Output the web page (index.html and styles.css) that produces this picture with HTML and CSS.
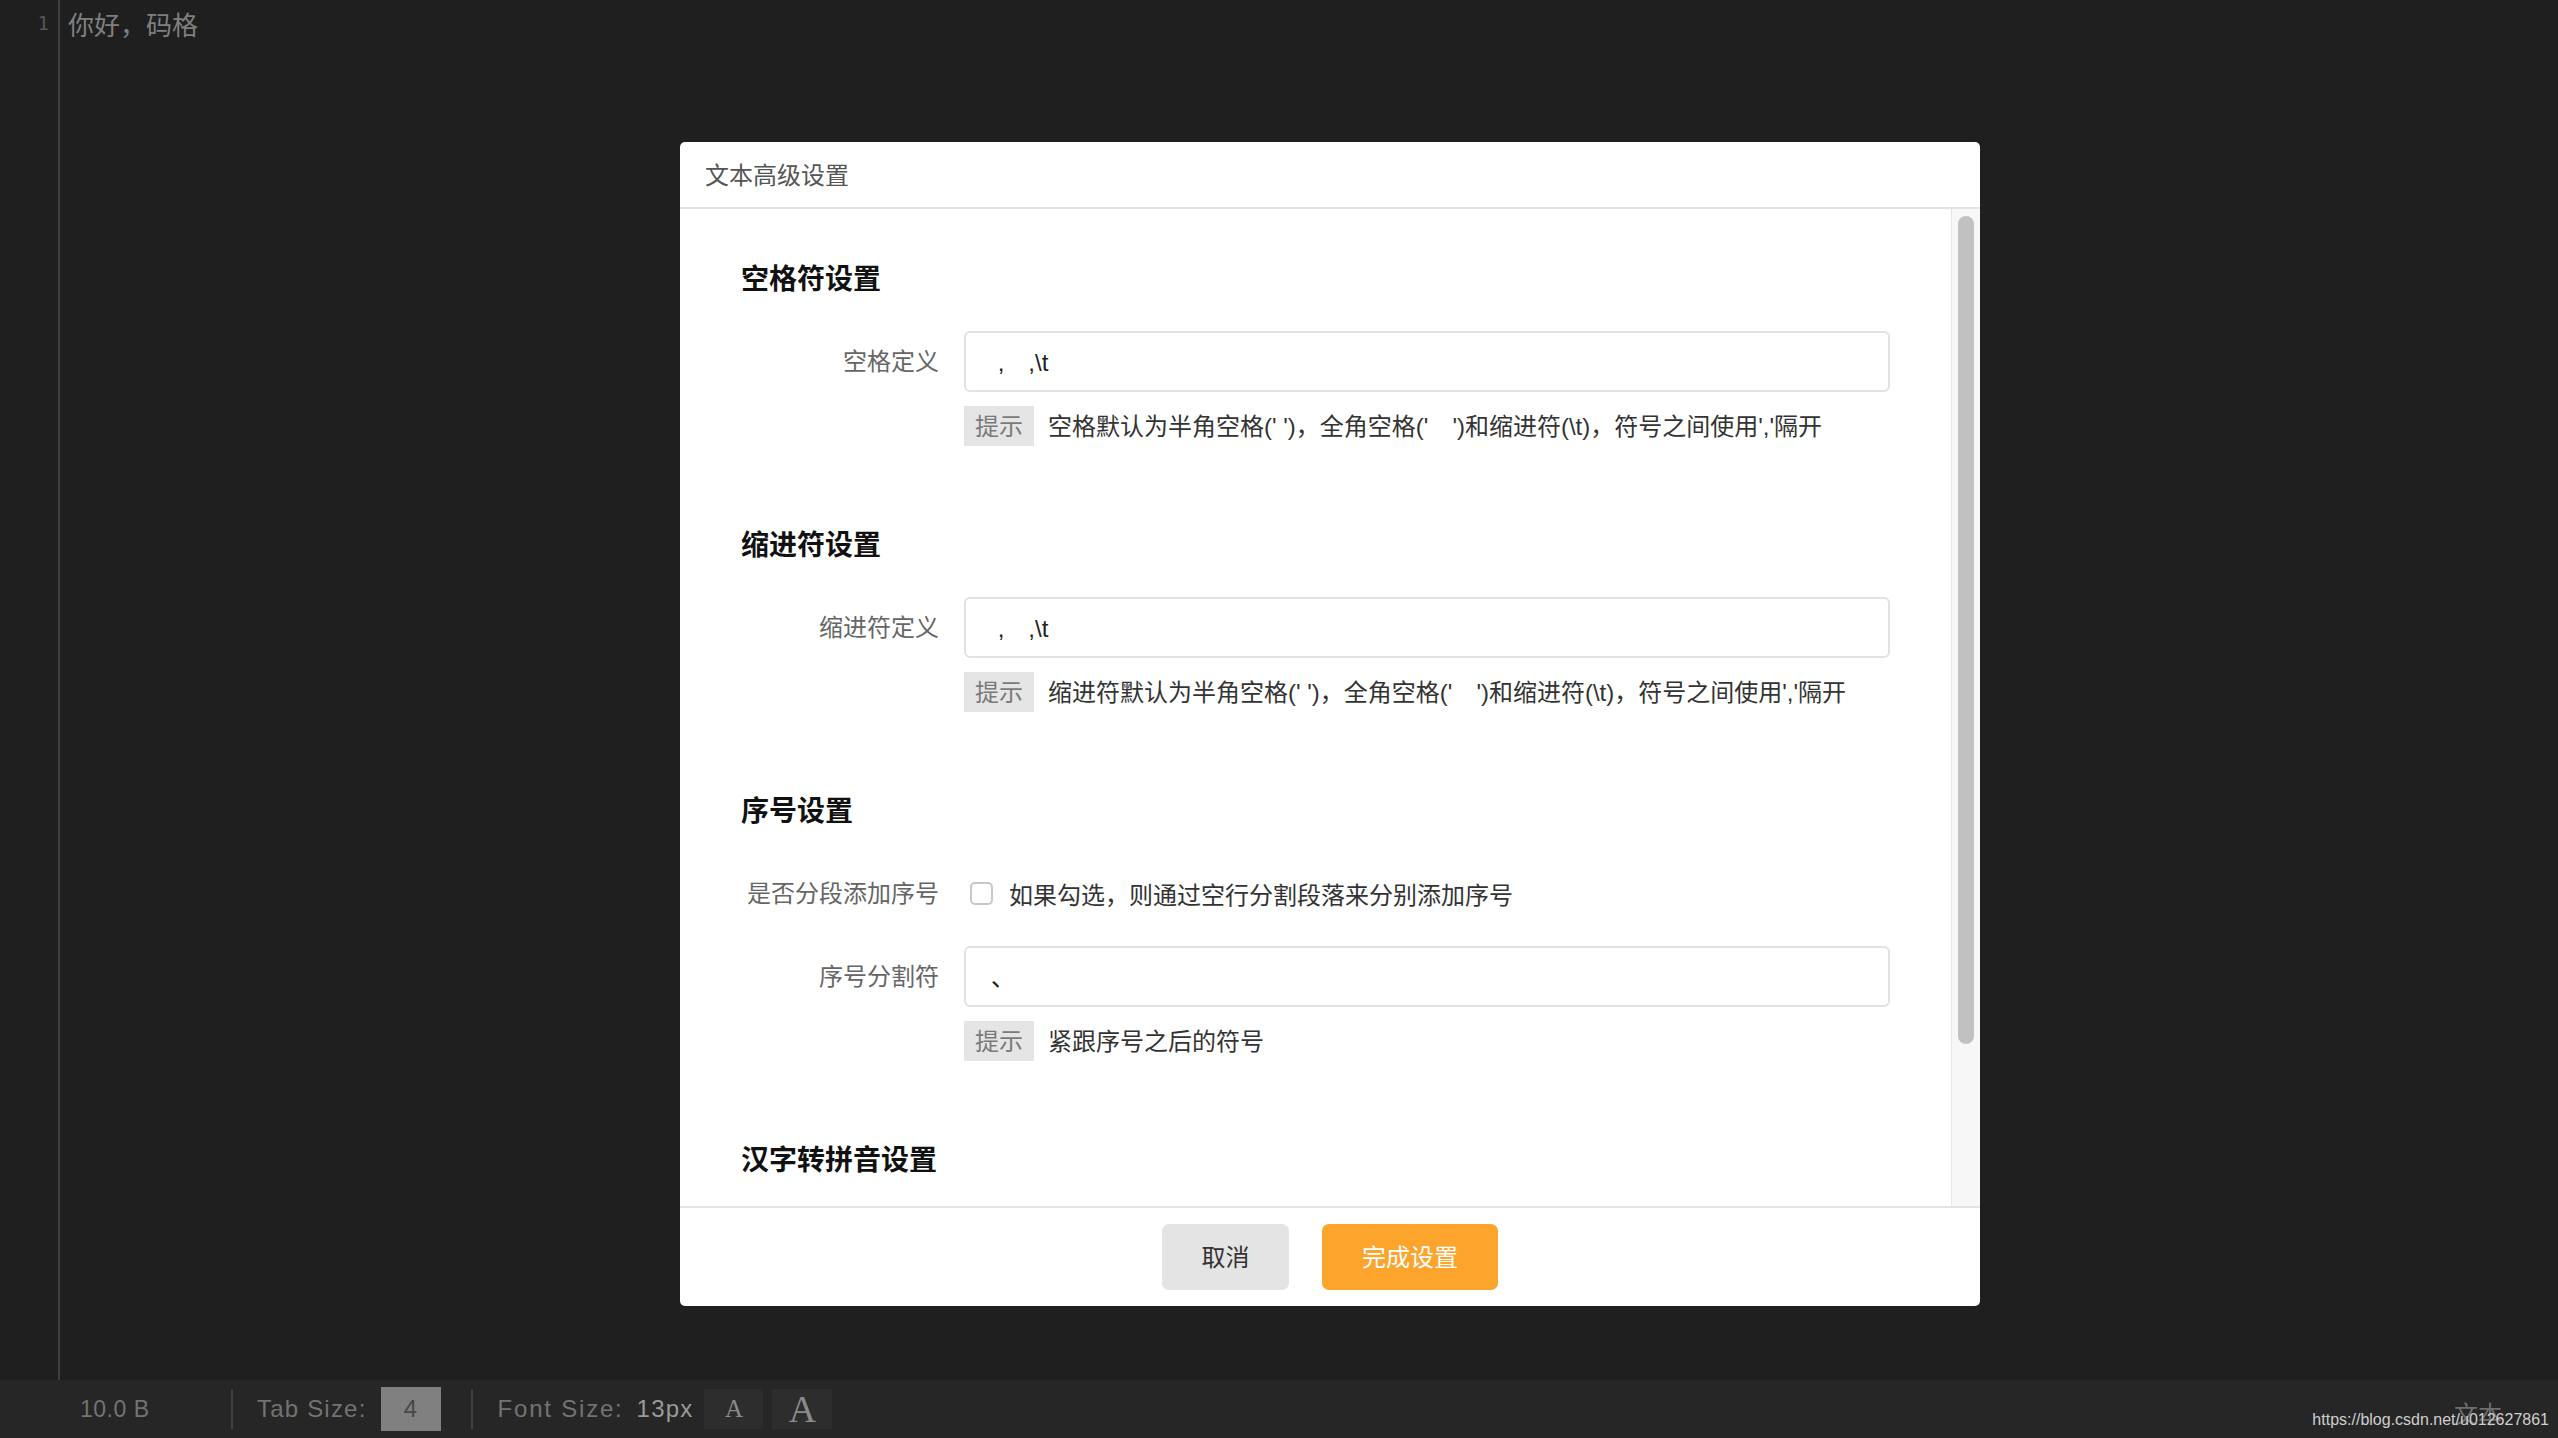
FILE: index.html
```html
<!DOCTYPE html>
<html lang="zh-CN">
<head>
<meta charset="utf-8">
<title>文本高级设置</title>
<link rel="stylesheet" href="styles.css">
</head>
<body>
<div class="app">
  <div class="editor">
    <div class="gutter"><div class="line-no">1</div></div>
    <div class="code"><div class="code-line">你好，码格</div></div>
  </div>
  <div class="statusbar">
    <div class="st-size">10.0 B</div>
    <div class="st-sep"></div>
    <div class="st-label st-tab">Tab Size:</div>
    <div class="st-tabbox">4</div>
    <div class="st-sep st-sep2"></div>
    <div class="st-label st-font">Font Size:</div>
    <div class="st-value">13px</div>
    <div class="st-abtn st-small">A</div>
    <div class="st-abtn st-big">A</div>
    <div class="st-spacer"></div>
    <div class="st-mode">文本</div>
  </div>
</div>

<div class="watermark">https://blog.csdn.net/u012627861</div>

<div class="modal">
  <div class="modal-header">文本高级设置</div>
  <div class="modal-body">
    <div class="modal-content">
      <section class="sec">
        <h3 class="sec-title">空格符设置</h3>
        <div class="form-row">
          <label class="form-label">空格定义</label>
          <div class="input"> ,　,\t</div>
        </div>
        <div class="tip-row">
          <span class="tip-badge">提示</span>
          <span class="tip-text">空格默认为半角空格(' ')，全角空格('　')和缩进符(\t)，符号之间使用','隔开</span>
        </div>
      </section>
      <section class="sec">
        <h3 class="sec-title">缩进符设置</h3>
        <div class="form-row">
          <label class="form-label">缩进符定义</label>
          <div class="input"> ,　,\t</div>
        </div>
        <div class="tip-row">
          <span class="tip-badge">提示</span>
          <span class="tip-text">缩进符默认为半角空格(' ')，全角空格('　')和缩进符(\t)，符号之间使用','隔开</span>
        </div>
      </section>
      <section class="sec">
        <h3 class="sec-title">序号设置</h3>
        <div class="form-row">
          <label class="form-label">是否分段添加序号</label>
          <span class="checkbox"></span>
          <span class="check-text">如果勾选，则通过空行分割段落来分别添加序号</span>
        </div>
        <div class="form-row form-row-gap">
          <label class="form-label">序号分割符</label>
          <div class="input">、</div>
        </div>
        <div class="tip-row">
          <span class="tip-badge">提示</span>
          <span class="tip-text">紧跟序号之后的符号</span>
        </div>
      </section>
      <section class="sec">
        <h3 class="sec-title">汉字转拼音设置</h3>
      </section>
    </div>
    <div class="scroll-track"><div class="scroll-thumb"></div></div>
  </div>
  <div class="modal-footer">
    <button class="btn btn-cancel">取消</button>
    <button class="btn btn-primary">完成设置</button>
  </div>
</div>
</body>
</html>
```

FILE: styles.css
```css
* { box-sizing: border-box; }
html, body {
  margin: 0;
  padding: 0;
  width: 2558px;
  height: 1438px;
  overflow: hidden;
  background: #1f1f1f;
  font-family: "Liberation Sans", "Noto Sans CJK SC", sans-serif;
}
.app {
  display: flex;
  flex-direction: column;
  height: 1438px;
}
.editor {
  flex: 1;
  display: flex;
  background: #1f1f1f;
}
.gutter {
  width: 60px;
  border-right: 2px solid #3e3e3e;
  padding-right: 9px;
  text-align: right;
}
.line-no {
  font-family: "DejaVu Sans Mono", monospace;
  font-size: 19px;
  line-height: 46px;
  color: #565656;
}
.code {
  padding-left: 8px;
}
.code-line {
  font-family: "Noto Sans CJK SC", sans-serif;
  font-size: 26px;
  line-height: 48px;
  color: #7f7f7f;
}

.statusbar {
  height: 58px;
  background: #262626;
  display: flex;
  align-items: center;
  color: #737373;
  font-size: 24px;
  position: relative;
}
.st-size {
  margin-left: 80px;
  width: 151px;
  font-size: 23px;
  letter-spacing: 0.5px;
}
.st-sep {
  width: 2px;
  height: 40px;
  background: #404040;
}
.st-label {
  letter-spacing: 1.2px;
}
.st-tab { margin-left: 24px; }
.st-tabbox {
  margin-left: 14px;
  width: 60px;
  height: 44px;
  background: #808080;
  color: #474747;
  display: flex;
  align-items: center;
  justify-content: center;
  font-size: 24px;
}
.st-sep2 { margin-left: 30px; }
.st-font { margin-left: 25px; letter-spacing: 1.8px; }
.st-value {
  margin-left: 13px;
  color: #9a9a9a;
  letter-spacing: 1.2px;
}
.st-abtn {
  width: 59px;
  height: 40px;
  background: #2d2d2d;
  color: #8a8a8a;
  font-family: "Liberation Serif", serif;
  display: flex;
  align-items: center;
  justify-content: center;
}
.st-small { margin-left: 11px; font-size: 25px; }
.st-big { margin-left: 9px; width: 60px; font-size: 38px; }
.st-spacer { flex: 1; }
.st-mode {
  font-family: "Noto Sans CJK SC", sans-serif;
  font-size: 24px;
  color: #6e6e6e;
  margin-right: 56px;
  margin-top: 6px;
}
.watermark {
  position: absolute;
  right: 9px;
  top: 1409px;
  font-family: "Liberation Sans", sans-serif;
  font-size: 16px;
  color: #cfcfcf;
  line-height: 22px;
}

.modal {
  position: absolute;
  left: 680px;
  top: 142px;
  width: 1300px;
  height: 1164px;
  background: #fff;
  border-radius: 5px;
  display: flex;
  flex-direction: column;
  overflow: hidden;
}
.modal-header {
  height: 67px;
  border-bottom: 2px solid #e3e3e3;
  padding-left: 25px;
  padding-bottom: 3px;
  display: flex;
  align-items: center;
  font-family: "Noto Sans CJK SC", sans-serif;
  font-size: 24px;
  color: #555;
}
.modal-body {
  height: 997px;
  display: flex;
}
.modal-content {
  flex: 1;
  overflow: hidden;
  padding: 48px 61px 0 61px;
  background: #fff;
}
.scroll-track {
  width: 29px;
  border-left: 1px solid #e6e6e6;
  background: #f7f7f7;
  padding: 7px 0 0 6px;
}
.scroll-thumb {
  width: 16px;
  height: 828px;
  border-radius: 8px;
  background: #c1c1c1;
}
.sec {
  margin-bottom: 77px;
}
.sec-title {
  margin: 0 0 34px 0;
  font-family: "Noto Sans CJK SC", sans-serif;
  font-size: 28px;
  line-height: 40px;
  font-weight: 700;
  color: #111;
}
.form-row {
  display: flex;
  align-items: center;
  height: 61px;
}
.form-row-gap { margin-top: 22px; }
.form-label {
  width: 198px;
  margin-right: 25px;
  padding-bottom: 4px;
  text-align: right;
  font-family: "Noto Sans CJK SC", sans-serif;
  font-size: 24px;
  color: #666;
  flex-shrink: 0;
}
.input {
  flex: 1;
  height: 61px;
  border: 2px solid #e2e2e2;
  border-radius: 6px;
  padding-left: 25px;
  padding-bottom: 2px;
  display: flex;
  align-items: center;
  font-family: "Liberation Sans", "Noto Sans CJK SC", sans-serif;
  font-size: 24px;
  color: #222;
  white-space: pre;
}
.checkbox {
  width: 23px;
  height: 23px;
  margin-left: 6px;
  border: 2px solid #c8c8c8;
  border-radius: 5px;
  background: #fff;
  flex-shrink: 0;
}
.check-text {
  margin-left: 16px;
  font-family: "Noto Sans CJK SC", sans-serif;
  font-size: 24px;
  color: #333;
}
.tip-row {
  display: flex;
  align-items: center;
  margin-top: 14px;
  margin-left: 223px;
  height: 40px;
}
.tip-badge {
  height: 40px;
  padding: 0 11px;
  background: #e5e5e5;
  color: #7a7a7a;
  font-family: "Noto Sans CJK SC", sans-serif;
  font-size: 24px;
  line-height: 38px;
}
.tip-text {
  margin-left: 14px;
  padding-bottom: 4px;
  font-family: "Liberation Sans", "Noto Sans CJK SC", sans-serif;
  font-size: 24px;
  color: #333;
  white-space: pre;
}
.modal-footer {
  flex: 1;
  border-top: 2px solid #e3e3e3;
  display: flex;
  align-items: center;
  justify-content: center;
  gap: 33px;
}
.btn {
  height: 66px;
  border: none;
  border-radius: 7px;
  font-family: "Noto Sans CJK SC", sans-serif;
  font-size: 24px;
  padding: 0 0 3px 0;
  cursor: pointer;
}
.btn-cancel {
  width: 127px;
  background: #e4e4e4;
  color: #333;
}
.btn-primary {
  width: 176px;
  background: #fca42b;
  color: #fff;
}
```
